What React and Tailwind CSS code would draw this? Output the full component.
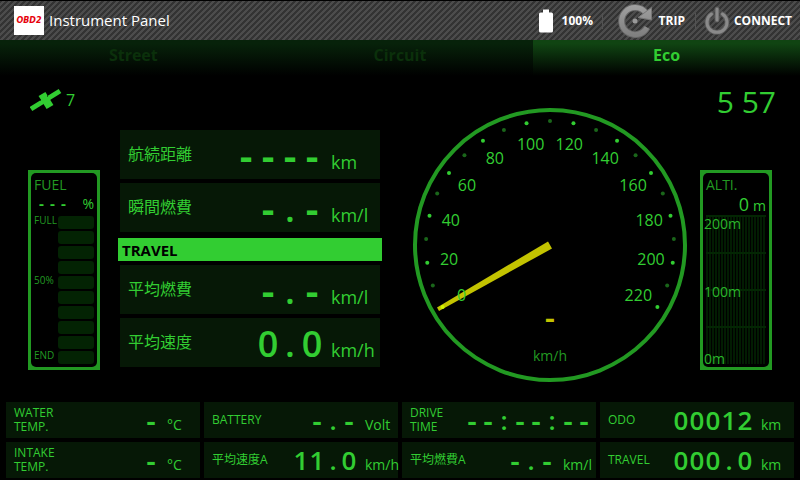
const FONT = "font-['Open_Sans','Noto_Sans_CJK_JP',sans-serif]";

const tabs = [
  { name: "Street", active: false },
  { name: "Circuit", active: false },
  { name: "Eco", active: true },
];

const rangeCards = [
  { label: "航続距離", value: "----", unit: "km" },
  { label: "瞬間燃費", value: "-.-", unit: "km/l" },
];

const travelCards = [
  { label: "平均燃費", value: "-.-", unit: "km/l" },
  { label: "平均速度", value: "0.0", unit: "km/h" },
];

const stats = [
  { label: "WATER TEMP.", value: "-", unit: "°C" },
  { label: "BATTERY", value: "-.-", unit: "Volt" },
  { label: "DRIVE TIME", value: "--:--:--" },
  { label: "ODO", value: "00012", unit: "km" },
  { label: "INTAKE TEMP.", value: "-", unit: "°C" },
  { label: "平均速度A", value: "11.0", unit: "km/h" },
  { label: "平均燃費A", value: "-.-", unit: "km/l" },
  { label: "TRAVEL", value: "000.0", unit: "km" },
];

const fuelRows = ["FULL", "", "", "", "50%", "", "", "", "", "END"];

// Fixed-width readout, one cell per character
function Digits({ value, cell }) {
  return (
    <span className="flex items-baseline font-semibold">
      {value.split("").map((char, i) => (
        <span key={i} className={`${cell} text-center`}>
          {char === "-" ? (
            <span className="font-['Liberation_Mono',monospace] leading-none font-bold">-</span>
          ) : (
            char
          )}
        </span>
      ))}
    </span>
  );
}

function TopBar() {
  return (
    <header className="flex h-10 items-center border-t border-black bg-[linear-gradient(135deg,#333_25%,#4c4c4c_25%,#4c4c4c_50%,#333_50%,#333_75%,#4c4c4c_75%)] bg-size-[6px_6px] pl-3.5 text-white">
      <div className="flex h-[29px] w-[30px] items-center justify-center bg-white font-['DejaVu_Sans',sans-serif] text-[8px] font-bold italic text-red-600">
        OBD2
      </div>
      <h1 className="ml-[5px] flex-1 text-[15px]">Instrument Panel</h1>
      <div className="flex items-center text-xs font-bold">
        <svg width="16" height="24" viewBox="0 0 16 24" fill="#fff">
          <path d="M5 0.500h6v3h2.500q1.500 0 1.500 1.500v17q0 1.500-1.500 1.500h-11Q1 23.500 1 22V5q0-1.500 1.500-1.500H5z" />
        </svg>
        <span className="ml-2 w-10">100%</span>
        <span className="h-4 w-px bg-neutral-600" />
        <button className="ml-3 flex items-center gap-1 font-bold">
          <TripIcon />
          TRIP
        </button>
        <span className="ml-2.5 h-4 w-px bg-neutral-600" />
        <button className="ml-2 mr-2 flex items-center gap-1 font-bold">
          <PowerIcon />
          CONNECT
        </button>
      </div>
    </header>
  );
}

function TripIcon() {
  return (
    <svg width="40" height="36" viewBox="0 0 40 36" fill="none">
      <defs>
        <linearGradient id="metal" x1="0" y1="0" x2="0" y2="36" gradientUnits="userSpaceOnUse">
          <stop offset="0" stopColor="#a2a2a2" />
          <stop offset="1" stopColor="#7c7c7c" />
        </linearGradient>
      </defs>
      <path d="M30.500 9.500A13.500 13.500 0 1 0 32 24.500" stroke="#666" strokeWidth="7" />
      <path d="M30.500 9.500A13.500 13.500 0 1 0 32 24.500" stroke="url(#metal)" strokeWidth="5" />
      <path d="M23 14.500L36.500 4.500V17z" fill="url(#metal)" stroke="#777" />
      <circle cx="20" cy="18" r="2.500" fill="#999" />
    </svg>
  );
}

function PowerIcon() {
  return (
    <svg width="26" height="30" viewBox="0 0 26 30" fill="none" strokeLinecap="round">
      <path d="M7.500 8A10 10 0 1 0 18.500 8M13 3v11" stroke="#5c5c5c" strokeWidth="5" />
      <path d="M7.500 8A10 10 0 1 0 18.500 8M13 3v11" stroke="#8a8a8a" strokeWidth="3" />
    </svg>
  );
}

function Tabs() {
  return (
    <nav className="grid h-9 grid-cols-3">
      {tabs.map((tab) => (
        <button
          key={tab.name}
          className={`bg-linear-to-b/srgb to-black pb-1.5 text-base font-bold ${
            tab.active ? "from-[#104412] from-10% text-[#32cd32]" : "from-[#07220a] from-10% text-[#0b300b]"
          }`}
        >
          {tab.name}
        </button>
      ))}
    </nav>
  );
}

function Framed({ children }) {
  return (
    <div className="h-[200px] w-[72px] bg-[#229922] p-[3px]">
      <div className="flex h-full flex-col rounded-[5px] bg-black px-[3px] pt-0.5">{children}</div>
    </div>
  );
}

function FuelGauge() {
  return (
    <Framed>
      <p className="text-sm leading-5 text-[#229922]">FUEL</p>
      <p className="flex h-[21px] items-baseline justify-between pl-0.5 text-sm leading-[18px]">
        <Digits value="---" cell="w-[11px]" />
        <span>%</span>
      </p>
      <div className="flex flex-col gap-0.5">
        {fuelRows.map((mark, i) => (
          <div key={i} className="flex h-[13px] items-start justify-between">
            <span className="w-6 text-[10px] leading-[9px] text-[#229922]">{mark}</span>
            <span className="h-full w-9 rounded-[3px] bg-[#032303]" />
          </div>
        ))}
      </div>
    </Framed>
  );
}

function AltitudeGauge() {
  return (
    <Framed>
      <p className="text-sm leading-5 text-[#229922]">ALTI.</p>
      <p className="flex h-5 items-baseline justify-end gap-1 text-sm leading-[18px]">
        <span className="text-lg leading-[18px]">0</span> m
      </p>
      <div className="relative h-[150px]">
        <svg className="absolute inset-0" width="60" height="150" viewBox="0 0 60 150">
          {Array.from({ length: 20 }, (_, i) => (
            <rect key={i} x={i * 3} y="0" width="2" height="149" fill="#021c02" />
          ))}
          {[0, 37, 74, 111].map((y) => (
            <rect key={y} x="0" y={y} width="60" height="2" fill="#032603" />
          ))}
        </svg>
        <div className="relative -ml-0.5 flex h-full flex-col justify-between pt-[3px] text-sm leading-3 text-[#2bb52b]">
          <span>200m</span>
          <span>100m</span>
          <span>0m</span>
        </div>
      </div>
    </Framed>
  );
}

function Card({ label, value, unit }) {
  return (
    <div className="mx-0.5 flex h-[49px] bg-[#061806] pl-2">
      <span className="flex-1 self-center pb-0.5 text-base">{label}</span>
      <div className="flex items-baseline gap-2">
        <div className="text-4xl leading-[52px]">
          <Digits value={value} cell="w-[22px]" />
        </div>
        <span className="w-[49px] text-lg">{unit}</span>
      </div>
    </div>
  );
}

function Speedometer() {
  // 0 to 220 km/h over a 240 degree sweep
  const point = (speed, r) => {
    const a = ((150 + (speed / 220) * 240) * Math.PI) / 180;
    return { x: 137 + r * Math.cos(a), y: 137 + r * Math.sin(a) };
  };
  const ticks = Array.from({ length: 23 }, (_, i) => i * 10);

  return (
    <svg className="h-auto w-full" viewBox="0 0 274 274" fill="#32cd32">
      <circle cx="137" cy="137" r="135" fill="none" stroke="#229922" strokeWidth="4" />
      <path d="M135 133.500L24 199.500L26 203L139 140.500z" fill="#c3c300" />
      {ticks.map((speed) => {
        const dot = point(speed, 124);
        const major = speed % 20 === 0;
        return (
          <circle
            key={speed}
            cx={dot.x}
            cy={dot.y}
            r="2"
            fill={speed === 0 ? "#d2f500" : major ? "#32cd32" : "#1a661a"}
          />
        );
      })}
      {ticks
        .filter((speed) => speed % 20 === 0)
        .map((speed) => {
          const at = point(speed, 102);
          return (
            <text key={speed} x={at.x} y={at.y + 5} fontSize="16" textAnchor="middle">
              {speed}
            </text>
          );
        })}
      <text
        x="137"
        y="220"
        fontSize="28"
        textAnchor="middle"
        fill="#c3c300"
        className="font-['Liberation_Mono',monospace] font-bold"
      >
        -
      </text>
      <text x="137" y="253" fontSize="14" textAnchor="middle" fill="#229922">
        km/h
      </text>
    </svg>
  );
}

function Stat({ label, value, unit }) {
  return (
    <div className="flex h-9 bg-[#061806] pl-2">
      <span className={`flex-1 self-center text-xs leading-[14px] ${label.includes(" ") ? "max-w-12" : ""}`}>
        {label}
      </span>
      <div className="ml-auto flex items-baseline gap-2">
        <div className="text-[26px] leading-[37px]">
          <Digits value={value} cell="w-4" />
        </div>
        {unit ? <span className="w-[33px] text-sm">{unit}</span> : <span className="-ml-1" />}
      </div>
    </div>
  );
}

function Satellites() {
  return (
    <div className="flex h-6 items-center gap-1 pl-0.5 text-base">
      <svg width="32" height="24" viewBox="0 0 32 24" fill="none" stroke="#32cd32">
        <path d="M1 21L30 3" strokeWidth="5" />
        <path d="M12 6L20 19" strokeWidth="8" />
        <path d="M10 12h1M17 8h1" stroke="#000" />
      </svg>
      7
    </div>
  );
}

export default function App() {
  return (
    <div className={`${FONT} min-h-screen bg-black text-[#32cd32]`}>
      <TopBar />
      <Tabs />
      <main className="flex h-[326px] pl-7 pr-5">
        <div className="flex w-[72px] flex-col gap-[58px] pt-3">
          <Satellites />
          <FuelGauge />
        </div>
        <div className="ml-[18px] flex flex-[264] flex-col gap-1 pt-[54px]">
          {rangeCards.map((card) => (
            <Card key={card.label} {...card} />
          ))}
          <h2 className="mt-0.5 h-[23px] bg-[#32cd32] pl-1 text-[15px] leading-6 font-bold text-black">TRAVEL</h2>
          {travelCards.map((card) => (
            <Card key={card.label} {...card} />
          ))}
        </div>
        <div className="mx-[13px] flex-[274] pl-[18px] pt-8">
          <Speedometer />
        </div>
        <div className="flex w-20 flex-col gap-[52px] pt-2.5">
          <p className="pr-1 text-right text-3xl leading-8">5 57</p>
          <AltitudeGauge />
        </div>
      </main>
      <footer className="grid grid-cols-4 gap-1 px-1.5">
        {stats.map((stat) => (
          <Stat key={stat.label} {...stat} />
        ))}
      </footer>
    </div>
  );
}
